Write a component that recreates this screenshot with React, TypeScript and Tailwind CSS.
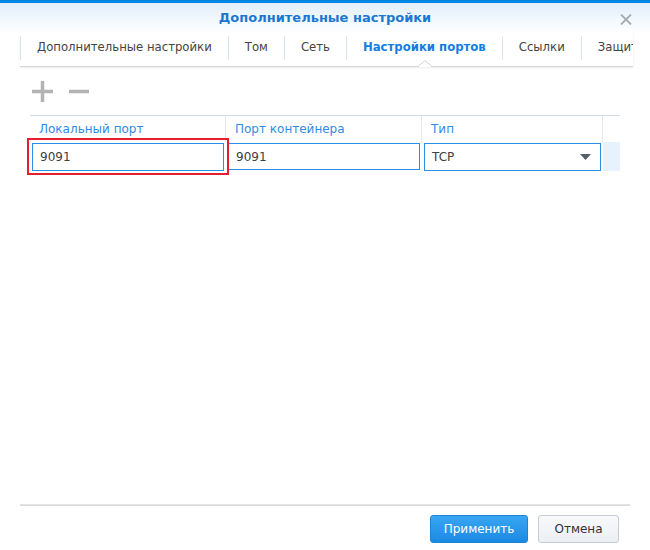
import React from 'react'

const tabs = ['Дополнительные настройки', 'Том', 'Сеть', 'Настройки портов', 'Ссылки', 'Защита']

export default function App() {
  return (
    <div className="relative w-[650px] h-[550px] bg-white flex flex-col font-['DejaVu_Sans',sans-serif] text-[12px] text-[#333]">
      <div className="h-[3px] bg-[#0086e5]" />

      {/* Заголовок окна */}
      <div className="relative h-[30px] flex items-center justify-center bg-gradient-to-b from-[#e2effb] to-white">
        <span className="font-bold text-[13px] text-[#1a78d2]">Дополнительные настройки</span>
        <svg className="absolute right-[18px] top-[11px] w-[12px] h-[11px]" viewBox="0 0 12 11">
          <path d="M1 0.5 L11 10.5 M11 0.5 L1 10.5" stroke="#a3abb3" strokeWidth="1.8" />
        </svg>
      </div>

      {/* Вкладки */}
      <div className="relative ml-[20px] mr-[17px] pt-[3px] pb-[6px] border-b border-[#d6d6d6] shadow-[0_1px_2px_rgba(0,0,0,0.08)]">
        <div className="flex h-[24px] overflow-hidden whitespace-nowrap text-[11.7px]">
          {tabs.map((t) => (
            <div
              key={t}
              className={
                t === 'Настройки портов'
                  ? 'flex items-center px-[16px] border-l border-[#dde3ea] font-bold text-[#127ee0]'
                  : 'flex items-center px-[16px] border-l border-[#dde3ea] text-[#444]'
              }
            >
              {t}
            </div>
          ))}
        </div>
        <svg className="absolute left-[398px] bottom-[-1px] w-[14px] h-[7px]" viewBox="0 0 14 7">
          <path d="M0 7 L7 0.5 L14 7 Z" fill="#fff" />
          <path d="M0 6.5 L7 0.5 L14 6.5" fill="none" stroke="#d6d6d6" strokeWidth="1" />
        </svg>
      </div>

      {/* Панель инструментов */}
      <div className="flex items-center h-[48px] pl-[32px] gap-[16px]">
        <svg className="w-[21px] h-[21px]" viewBox="0 0 21 21">
          <path d="M10.5 0 V21 M0 10.5 H21" stroke="#b3b3b3" strokeWidth="3.5" />
        </svg>
        <svg className="w-[20px] h-[21px]" viewBox="0 0 20 21">
          <path d="M0 10.5 H20" stroke="#b3b3b3" strokeWidth="3.5" />
        </svg>
      </div>

      {/* Таблица */}
      <div className="mx-[30px] border-t border-[#d3dce6]">
        <div className="flex h-[26px] text-[#2f8be3]">
          <div className="w-[196px] flex items-center pl-[9px] border-r border-[#e3e9ef]">Локальный порт</div>
          <div className="w-[196px] flex items-center pl-[9px] border-r border-[#e3e9ef]">Порт контейнера</div>
          <div className="w-[181px] flex items-center pl-[9px] border-r border-[#e3e9ef]">Тип</div>
          <div className="flex-1" />
        </div>
        <div className="flex h-[30px]">
          <div className="w-[196px] px-[2px] py-[1px]">
            <div className="h-[28px] border border-[#2a8fe6] flex items-center pl-[7px] text-[#404040]">9091</div>
          </div>
          <div className="w-[196px] px-[2px] py-[1px]">
            <div className="h-[27px] border border-[#2a8fe6] flex items-center pl-[7px] text-[#404040]">9091</div>
          </div>
          <div className="w-[181px] px-[2px] py-[1px]">
            <div className="h-[28px] border border-[#2a8fe6] flex items-center justify-between pl-[7px] pr-[9px] text-[#404040]">
              <span>TCP</span>
              <svg className="w-[11px] h-[6px]" viewBox="0 0 11 6">
                <path d="M0 0 H11 L5.5 6 Z" fill="#555d66" />
              </svg>
            </div>
          </div>
          <div className="flex-1 bg-[#e6f3fe] h-[29px]" />
        </div>
      </div>

      {/* Выделение */}
      <div className="absolute left-[27px] top-[138px] w-[202px] h-[37px] border-2 border-[#e3202b]" />

      <div className="flex-1" />

      {/* Нижняя панель */}
      <div className="ml-[20px] mr-[20px] h-[2px] bg-gradient-to-b from-[#e6e6e6] to-[#d8d8d8]" />
      <div className="flex justify-end items-start gap-[10px] pt-[9px] pr-[31px] h-[44px]">
        <button className="w-[98px] h-[28px] rounded-[3px] bg-gradient-to-b from-[#38a6f3] to-[#1a8ae2] border border-[#1b84d6] text-white text-[12px]">
          Применить
        </button>
        <button className="w-[81px] h-[28px] rounded-[3px] bg-gradient-to-b from-[#f8f9fb] to-[#eceff3] border border-[#c6cbd2] text-[#333] text-[12px]">
          Отмена
        </button>
      </div>
    </div>
  )
}
